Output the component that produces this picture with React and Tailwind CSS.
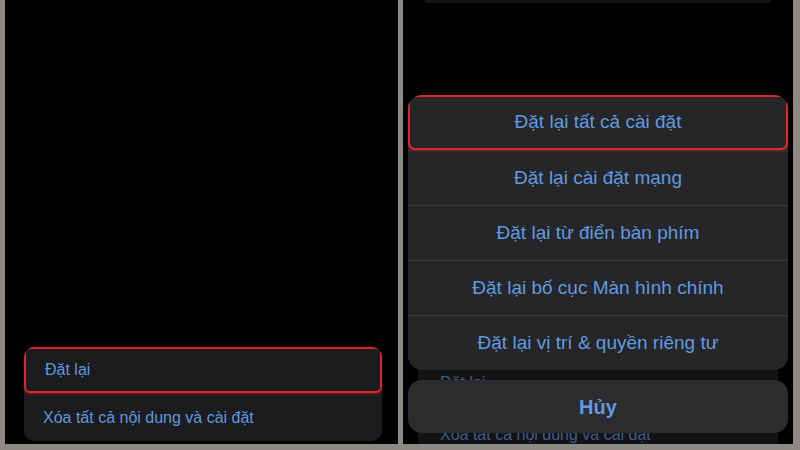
const font = { fontFamily: '"Liberation Sans", Arial, sans-serif' };

const sheetRows = [
  "Đặt lại cài đặt mạng",
  "Đặt lại từ điển bàn phím",
  "Đặt lại bố cục Màn hình chính",
  "Đặt lại vị trí & quyền riêng tư",
];

export default function App() {
  return (
    <div className="w-[800px] h-[450px] bg-[#8d8a86] flex gap-[5px] pl-[5px] pr-[7px] pb-[6px]" style={font}>
      {/* left phone screen */}
      <div className="w-[393px] h-full bg-black flex flex-col justify-end pl-[19px] pr-[16px] pb-[3px]">
        <div className="rounded-[10px] bg-[#1c1c1e] overflow-hidden">
          <div className="h-[46px] flex items-center pl-[19px] text-[16px] text-[#5f98de] rounded-[6px] border-2 border-[#e1262b] shadow-[0_0_4px_rgba(225,38,43,0.7)]">
            Đặt lại
          </div>
          <div className="h-[48px] flex items-center pl-[19px] pt-[2px] text-[16px] text-[#5f98de]">
            Xóa tất cả nội dung và cài đặt
          </div>
        </div>
      </div>

      {/* right phone screen */}
      <div className="relative flex-1 h-full bg-black overflow-hidden flex flex-col">
        <div className="mx-[22px] h-[3px] rounded-b-[8px] bg-[#141416]" />

        {/* dimmed list behind the sheet */}
        <div className="mt-auto mx-[15px] -mb-[20px] h-[104px] rounded-[10px] bg-[#131315] text-[16px] text-[#3b5e8c]">
          <div className="h-[46px] flex items-center pl-[22px]">Đặt lại</div>
          <div className="h-[58px] flex items-center pl-[22px]">Xóa tất cả nội dung và cài đặt</div>
        </div>

        {/* action sheet */}
        <div className="absolute left-[5px] right-[5px] top-[95px] rounded-[14px] bg-[#262628] overflow-hidden">
          <div className="h-[55px] flex items-center justify-center text-[19px] text-[#609ae0] rounded-[7px] border-2 border-[#e1262b] shadow-[0_0_4px_rgba(225,38,43,0.7)]">
            Đặt lại tất cả cài đặt
          </div>
          {sheetRows.map((t) => (
            <div key={t} className="h-[55px] flex items-center justify-center text-[19px] text-[#609ae0] border-t border-[#3a3a3c]">
              {t}
            </div>
          ))}
        </div>

        <div className="absolute left-[5px] right-[5px] top-[380px] h-[53px] rounded-[14px] bg-[#2c2c2e] flex items-center justify-center text-[20px] font-bold text-[#609ae0]">
          Hủy
        </div>
      </div>
    </div>
  );
}
